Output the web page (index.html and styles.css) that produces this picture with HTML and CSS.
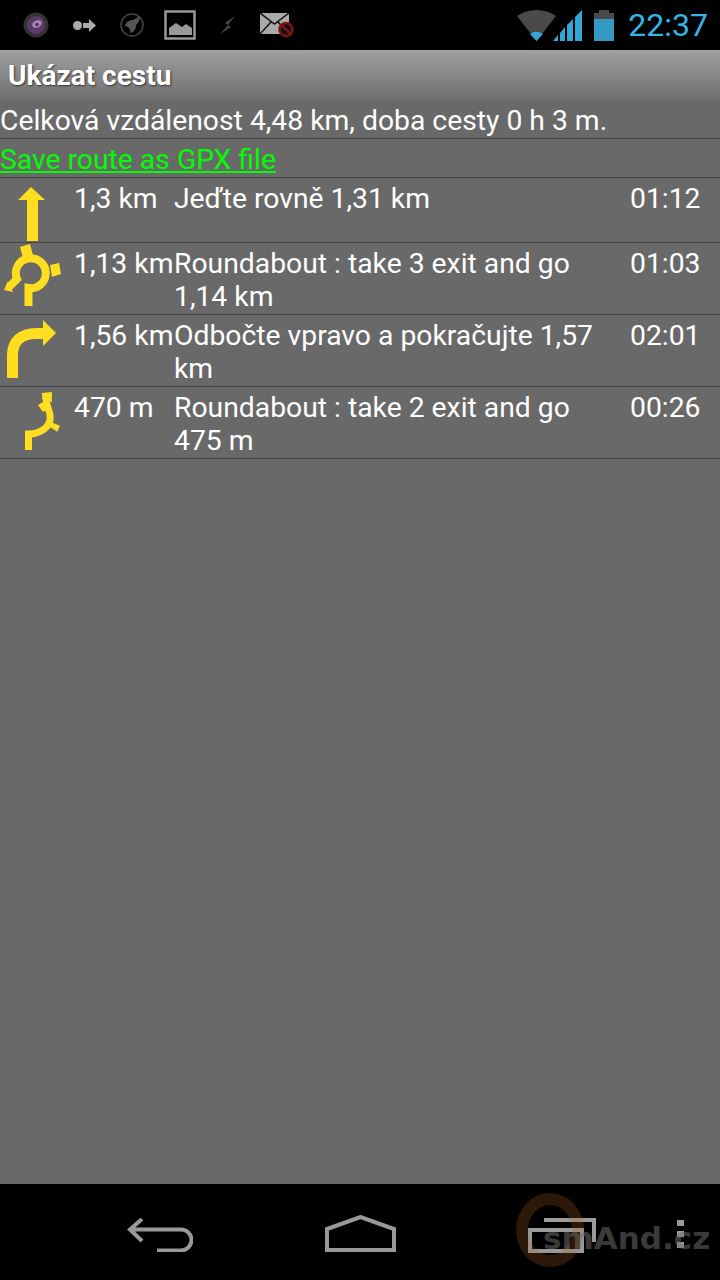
FILE: index.html
```html
<!DOCTYPE html>
<html lang="cs">
<head>
<meta charset="utf-8">
<title>Ukázat cestu</title>
<link rel="stylesheet" href="styles.css">
</head>
<body>
<div class="app">
  <header class="status">
    <svg class="ni lens" width="30" height="30" viewBox="0 0 30 30"><circle cx="15" cy="15" r="11.500" fill="#3a3036" stroke="#333" stroke-width="2"/><circle cx="15" cy="15" r="9" fill="#5b3a68"/><ellipse cx="16" cy="14" rx="5" ry="3.500" fill="#a88ab2" transform="rotate(-25 16 14)"/><circle cx="16" cy="14.500" r="1.800" fill="#4a2f50"/></svg>
    <svg class="ni a" width="23" height="13" viewBox="0 0 23 13"><circle cx="4.500" cy="6.500" r="4.500" fill="#aaa"/><path d="M10 4h6V0l7 6.500-7 6.500V9h-6z" fill="#aaa"/></svg>
    <svg class="ni b" width="24" height="24" viewBox="0 0 24 24"><circle cx="12" cy="12" r="11" fill="none" stroke="#444" stroke-width="1.500"/><path d="M5 13c1-4 4-6 8-6l7-4c0 3-1 6-4 9 0 4-2 7-6 8 1-2 0-4-1-5-1-1-2-2-4-2z" fill="#555"/></svg>
    <svg class="ni c" width="33" height="31" viewBox="0 0 33 31"><rect x="1.500" y="1.500" width="29" height="27" fill="none" stroke="#999" stroke-width="2.500"/><path d="M5 25V18l7-5 6 4 4-3 6 4v7z" fill="#999"/></svg>
    <svg class="ni d" width="16" height="18" viewBox="0 0 16 18"><path d="M15 0 5 7l3 2-8 9 11-7-3-2z" fill="#444"/></svg>
    <svg class="ni e" width="34" height="25" viewBox="0 0 34 25"><rect x="0" y="0" width="29" height="21" fill="#aaa"/><path d="M0 0l14.500 11L29 0M0 21l11-12M29 21 18 9" fill="none" stroke="#111" stroke-width="1.500"/><circle cx="26" cy="16.500" r="6.500" fill="#111" stroke="#7a1515" stroke-width="2.500"/><path d="M21.500 12l9 9" stroke="#7a1515" stroke-width="2.500"/></svg>
    <div class="sys">
      <svg class="wifi" width="39" height="31" viewBox="0 0 39 31"><path d="M0 6C11-2 28-2 39 6L19.500 31z" fill="#4a4a4a"/><path d="M13 24Q19.500 19.500 26 24L19.500 31z" fill="#33a5d6"/></svg>
      <svg class="sig" width="29" height="31" viewBox="0 0 29 31"><path d="M0 31 5 25V31zM7 23l5-6v14H7zM14 15l6-6v22h-6zM22 7l7-7v31h-7z" fill="#33a5d6"/></svg>
      <svg class="bat" width="20" height="31" viewBox="0 0 20 31"><path d="M5 0h10v3H5zM0 3h20v6H0z" fill="#4a4a4a"/><rect x="0" y="9" width="20" height="22" fill="#3399c2"/></svg>
      <span class="clock">22:37</span>
    </div>
  </header>
  <div class="titlebar"><h1 class="title">Ukázat cestu</h1></div>
  <main class="content">
    <p class="summary">Celková vzdálenost 4,48 km, doba cesty 0 h 3 m.</p>
    <p class="gpx"><a class="gpx-link" href="#">Save route as GPX file</a></p>
    <div class="row r1">
      <div class="icon"><svg width="64" height="64" viewBox="0 0 64 64"><path d="M27 63V22H18L31 9 45 22H38v41z" fill="#ffdd1f"/></svg></div>
      <div class="dist">1,3 km</div>
      <div class="desc">Jeďte rovně 1,31 km</div>
      <div class="time">01:12</div>
    </div>
    <div class="row r2">
      <div class="icon"><svg width="64" height="64" viewBox="0 0 64 64"><path d="M28.500 63V45A15 15 0 1 0 17 36L9 44" fill="none" stroke="#ffdd1f" stroke-width="8"/><path d="M20 4l10-3 3 11-10 3zM50 22l9-2 2 11-9 3zM4 47l4-9 5 11z" fill="#ffdd1f"/></svg></div>
      <div class="dist">1,13 km</div>
      <div class="desc">Roundabout : take 3 exit and go 1,14 km</div>
      <div class="time">01:03</div>
    </div>
    <div class="row r3">
      <div class="icon"><svg width="64" height="64" viewBox="0 0 64 64"><path d="M12.500 63V40C12.500 26 22 18.500 36 18.500H44" fill="none" stroke="#ffdd1f" stroke-width="11"/><path d="M43 5 56 18 43 31z" fill="#ffdd1f"/></svg></div>
      <div class="dist">1,56 km</div>
      <div class="desc">Odbočte vpravo a pokračujte 1,57 km</div>
      <div class="time">02:01</div>
    </div>
    <div class="row r4">
      <div class="icon"><svg width="64" height="64" viewBox="0 0 64 64"><path d="M28.500 63V47C40 47 52 40 50 28 49 22 46 18 46 11" fill="none" stroke="#ffdd1f" stroke-width="7"/><path d="M41.700 6 52 5 51.700 16 46.700 11.300 42.700 13zM46.700 38 50 34.700 60 38.700 57.300 44.700zM38 18 43 15 48 23 42.700 24.700z" fill="#ffdd1f"/></svg></div>
      <div class="dist">470 m</div>
      <div class="desc">Roundabout : take 2 exit and go 475 m</div>
      <div class="time">00:26</div>
    </div>
  </main>
  <footer class="nav">
    <svg class="nb back" width="66" height="34" viewBox="0 0 66 34"><path d="M15 1 3 11.500 15 23M3 11.500H54A10.500 10.500 0 0 1 54 32.500H30" fill="none" stroke="#999" stroke-width="4"/></svg>
    <svg class="nb home" width="72" height="37" viewBox="0 0 72 37"><path d="M2 35V14L35.500 2 69 14V35z" fill="none" stroke="#999" stroke-width="4"/></svg>
    <svg class="nb recent" width="70" height="36" viewBox="0 0 70 36"><path d="M16 2H66V24M2 12H54V33H2z" fill="none" stroke="#9a9a9a" stroke-width="4"/></svg>
    <div class="menu"><span class="dot"></span><span class="dot"></span><span class="dot"></span></div>
    <div class="ring"></div>
    <span class="mark">smAnd.cz</span>
  </footer>
</div>
</body>
</html>
```
FILE: styles.css
```css
* { box-sizing: border-box; }
html, body { margin: 0; padding: 0; }
body { font-family: Roboto, "Noto Sans", sans-serif; background: #000; }
.app { width: 720px; height: 1280px; display: flex; flex-direction: column; overflow: hidden; }
.status { height: 50px; background: #000; display: flex; align-items: center; flex: none; padding-left: 21px; }
.ni { flex: none; }
.a { margin-left: 22px; }
.b { margin-left: 24px; }
.c { margin-left: 20px; }
.d { margin-left: 23px; }
.e { margin-left: 24px; }
.sys { margin-left: auto; display: flex; align-items: center; padding-right: 12px; }
.sig { margin-left: -3px; }
.bat { margin-left: 12px; }
.clock { color: #33b5e5; font-size: 32px; font-weight: 400; margin-left: 14px; line-height: 50px; }
.titlebar { height: 50px; flex: none; display: flex; align-items: center; padding-left: 8px; background: linear-gradient(#a0a0a0, #6f6f6f); }
.title { margin: 0; font-size: 28px; font-weight: 700; color: #fff; text-shadow: 1px 1px 2px #333; }
.content { flex: 1; background: #696969; color: #fff; font-size: 28.3px; }
.summary { margin: 0; height: 39px; line-height: 42px; border-bottom: 1px solid #444; white-space: nowrap; }
.gpx { margin: 0; height: 39px; line-height: 42px; border-bottom: 1px solid #444; }
.gpx-link { color: #00ff00; text-decoration: underline; }
.row { display: grid; grid-template-columns: 74px 100px 1fr 90px; border-bottom: 1px solid #444; line-height: 33px; }
.r1 { height: 65px; }
.r2, .r3, .r4 { height: 72px; }
.icon { height: 64px; overflow: hidden; }
.dist { padding-top: 4px; white-space: nowrap; }
.desc { padding-top: 4px; padding-right: 32px; }
.time { padding-top: 4px; }
.nav { height: 96px; flex: none; background: #000; position: relative; display: flex; align-items: flex-start; padding-left: 127px; }
.nb { flex: none; }
.back { margin-top: 34px; }
.home { margin-top: 31px; margin-left: 132px; }
.recent { position: absolute; left: 528px; top: 34px; }
.menu { position: absolute; left: 677px; top: 36px; display: flex; flex-direction: column; gap: 5px; }
.dot { width: 7px; height: 6px; background: #999; }
.ring { position: absolute; left: 516px; top: 9px; width: 68px; height: 74px; border: 12px solid rgba(170,95,30,.25); border-radius: 50%; }
.mark { position: absolute; left: 543px; top: 36px; font: 700 31px "DejaVu Sans", sans-serif; color: rgba(110,110,110,.55); }
```
